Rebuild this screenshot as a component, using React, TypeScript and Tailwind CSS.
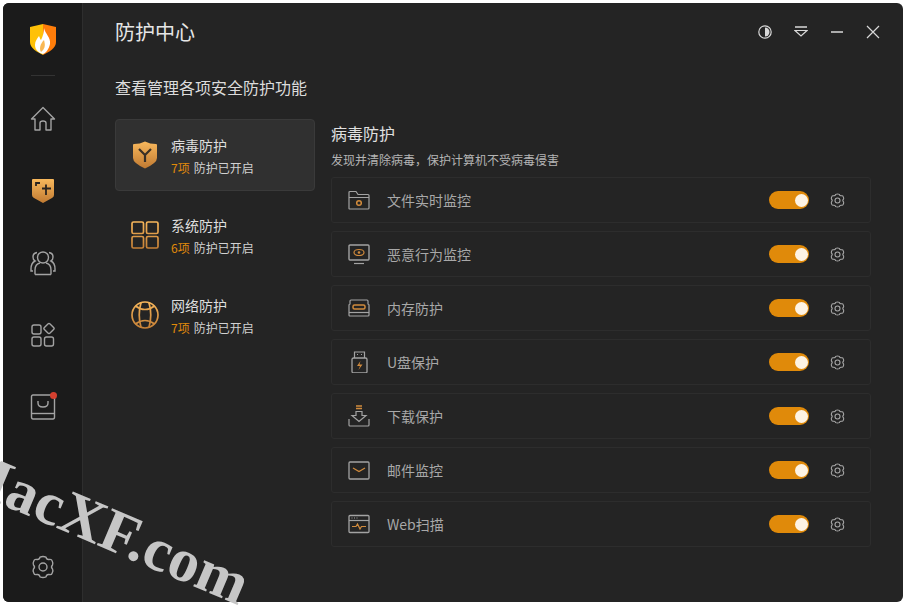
import React from "react";

const FONT = "[font-family:'Noto_Sans_CJK_SC','Liberation_Sans',sans-serif]";
const G = "#a3a3a3";
const A = "#d08a3c";

function Defs() {
  return (
    <svg width="0" height="0" className="absolute">
      <defs>
        <linearGradient id="amber" x1="0" y1="0" x2="0" y2="1">
          <stop offset="0" stopColor="#f8b85c" />
          <stop offset="1" stopColor="#c07a32" />
        </linearGradient>
        <linearGradient id="amberS" gradientUnits="userSpaceOnUse" x1="0" y1="0" x2="0" y2="30">
          <stop offset="0" stopColor="#f8b85c" />
          <stop offset="1" stopColor="#c07a32" />
        </linearGradient>
      </defs>
    </svg>
  );
}

const Logo = () => (
  <svg width="28" height="33" viewBox="0 0 28 33">
    <path d="M14 1 L1 4 V19 C1 25 8 29 14 32 Z" fill="#ffc107" />
    <path d="M14 1 L27 4 V19 C27 25 20 29 14 32 Z" fill="#ff7d0a" />
    <path d="M15 5 C16 11 22 14 21 21 C20 26 17 30 14 31 C10 30 6 27 6 22 C6 18 8 16 10 13 C11 15 11 16 12 17 C14 13 15 9 15 5 Z" fill="#fff" />
    <path d="M15 17 C16 21 17 25 12 29 C10 26 11 21 15 17 Z" fill="#f7a01c" opacity="0.75" />
  </svg>
);

const Home = () => (
  <svg width="26" height="26" viewBox="0 0 26 26" fill="none" stroke={G} strokeWidth="1.4">
    <path d="M1.5 13 L13 1.5 L24.5 13 H21 V24 H16 V17 Q16 15 13 15 Q10 15 10 17 V24 H5 V13 Z" strokeLinejoin="round" />
  </svg>
);

const ShieldNav = () => (
  <svg width="24" height="26" viewBox="0 0 24 26">
    <path d="M2 1 H22 Q23 1 23 2 V17 Q23 19 21 20 L12 25 L3 20 Q1 19 1 17 V2 Q1 1 2 1 Z" fill="url(#amber)" />
    <path d="M5 8 V5 H9 M11 10.5 H20 M15 6.5 V17" stroke="#2a2420" strokeWidth="1.8" fill="none" />
  </svg>
);

const Users = () => (
  <svg width="26" height="26" viewBox="0 0 26 26" fill="none" stroke={G} strokeWidth="1.4">
    <circle cx="13" cy="7.5" r="5.5" />
    <path d="M5 24.5 V20 Q5 14 10 13 M21 24.5 V20 Q21 14 16 13 M5 24.5 H21" />
    <path d="M7 2.5 Q3 3 3 7 Q3 10 5 11 Q1 13 1 19 V21 H3 M19 2.5 Q23 3 23 7 Q23 10 21 11 Q25 13 25 19 V21 H23" />
  </svg>
);

const Apps = () => (
  <svg width="26" height="26" viewBox="0 0 26 26" fill="none" stroke={G} strokeWidth="1.4">
    <rect x="2" y="3" width="9" height="9" rx="2" />
    <rect x="2" y="15" width="9" height="9" rx="2" />
    <rect x="14.5" y="15" width="9" height="9" rx="2" />
    <rect x="15" y="2.5" width="8" height="8" rx="1.5" transform="rotate(45 19 6.5)" />
  </svg>
);

const Store = () => (
  <svg width="26" height="26" viewBox="0 0 26 26" fill="none" stroke={G} strokeWidth="1.4">
    <path d="M24.5 4 V23 Q24.5 25 23 25 H3 Q1.5 25 1.5 23 V2.5 Q1.5 1 3 1 H21" />
    <path d="M1.5 19.5 H24.5" />
    <path d="M8 7 V9 Q8 13 13 13 Q18 13 18 9 V7" />
  </svg>
);

const Gear = ({ size = 24, color = G, sw = 1.4 }: { size?: number; color?: string; sw?: number }) => (
  <svg width={size} height={size} viewBox="0 0 24 24" fill="none" stroke={color} strokeWidth={sw} strokeLinejoin="round">
    <path d="M9 2.2 Q12 0.8 15 2.2 Q15.5 4.8 18 4.5 Q20.5 4 21 5.5 Q22.5 8.5 21.5 10 Q19.5 12 21.5 14 Q22.5 15.5 21 18.5 Q20.5 20 18 19.5 Q15.5 19.2 15 21.8 Q12 23.2 9 21.8 Q8.5 19.2 6 19.5 Q3.5 20 3 18.5 Q1.5 15.5 2.5 14 Q4.5 12 2.5 10 Q1.5 8.5 3 5.5 Q3.5 4 6 4.5 Q8.5 4.8 9 2.2 Z" />
    <circle cx="12" cy="12" r="4" />
  </svg>
);

const ShieldY = () => (
  <svg width="24" height="28" viewBox="0 0 24 28">
    <path d="M12 0.5 Q17 3 23 3 Q24 3 24 4 V17 Q24 22 12 27.5 Q0 22 0 17 V4 Q0 3 1 3 Q7 3 12 0.5 Z" fill="url(#amber)" />
    <path d="M6 8 L12 14 L18 8 M12 14 V21" stroke="#3a3026" strokeWidth="2.2" fill="none" />
  </svg>
);

const Grid = () => (
  <svg width="28" height="28" viewBox="0 0 28 28" fill="none" stroke="url(#amberS)" strokeWidth="1.7">
    <rect x="1" y="1" width="11.5" height="11.5" rx="1.5" />
    <rect x="15.5" y="1" width="11.5" height="11.5" rx="1.5" />
    <rect x="1" y="15.5" width="11.5" height="11.5" rx="1.5" />
    <rect x="15.5" y="15.5" width="11.5" height="11.5" rx="1.5" />
  </svg>
);

const Globe = () => (
  <svg width="28" height="28" viewBox="0 0 28 28" fill="none" stroke="url(#amberS)" strokeWidth="1.7">
    <circle cx="14" cy="14" r="13" />
    <path d="M4.5 5 Q9 8.5 14 8.5 Q19 8.5 23.5 5 M4.5 23 Q9 19.5 14 19.5 Q19 19.5 23.5 23" />
    <path d="M10 1.8 Q6.5 14 10 26.2 M18 1.8 Q21.5 14 18 26.2" />
  </svg>
);

const Svg22 = ({ children }: { children: React.ReactNode }) => (
  <svg width="22" height="22" viewBox="0 0 22 22" fill="none" stroke={G} strokeWidth="1.2">
    {children}
  </svg>
);

const IFolder = () => (
  <Svg22>
    <path d="M1 19.5 V3.5 Q1 2.5 2 2.5 H8 L10 5.5 H20 Q21 5.5 21 6.5 V19 Q21 20 20 20 H2 Q1 20 1 19.5 Z M1 8.5 H21" />
    <circle cx="11" cy="14" r="2.3" stroke={A} strokeWidth="1.5" />
  </Svg22>
);
const IScreen = () => (
  <Svg22>
    <rect x="1" y="2" width="20" height="15" rx="1" strokeWidth="1.4" />
    <path d="M6 20.5 H16" />
    <ellipse cx="11" cy="9.5" rx="5" ry="3" stroke={A} strokeWidth="1.2" />
    <circle cx="11" cy="9.5" r="1.3" fill={A} stroke="none" />
  </Svg22>
);
const IMem = () => (
  <Svg22>
    <path d="M3 3 H19 Q20 3 20 4 V7 Q21 7 21 8 V18 Q21 19 20 19 H2 Q1 19 1 18 V8 Q1 7 2 7 V4 Q2 3 3 3 Z" />
    <rect x="5" y="8" width="12" height="4" rx="1.5" stroke={A} strokeWidth="1.5" />
    <path d="M1 15.5 H21" />
  </Svg22>
);
const IUsb = () => (
  <Svg22>
    <rect x="4" y="7" width="15" height="15" rx="1.5" strokeWidth="1.3" />
    <path d="M6.5 7 V1 H16.5 V7 M9 3.5 H10 M13 3.5 H14" />
    <path d="M12.5 10 L9 15 H12 L10.5 19 L14.5 13.5 H11.5 Z" fill={A} stroke="none" />
  </Svg22>
);
const IDown = () => (
  <Svg22>
    <path d="M8 1 H14 M8 3.5 H14" stroke={A} strokeWidth="1.3" />
    <path d="M8 6.5 H14 V10.5 H18 L11 16.5 L4 10.5 H8 Z" />
    <path d="M1 14 V20 Q1 21 2 21 H20 Q21 21 21 20 V14" />
  </Svg22>
);
const IMail = () => (
  <Svg22>
    <rect x="1" y="3" width="20" height="17" rx="1" strokeWidth="1.3" />
    <path d="M5 9 L11 12.5 L17 9" stroke={A} strokeWidth="1.3" />
  </Svg22>
);
const IWeb = () => (
  <Svg22>
    <rect x="1" y="2.5" width="20" height="17" rx="1" strokeWidth="1.3" />
    <path d="M1 7.5 H21" />
    <path d="M3.5 5 H4.5 M6 5 H7 M8.5 5 H9.5" />
    <path d="M4 13.5 H8 L9.5 11 L12 16 L13.5 13.5 H18" stroke={A} />
  </Svg22>
);

const navItems = [<Home key="h" />, <ShieldNav key="s" />, <Users key="u" />, <Apps key="a" />];

const cats = [
  { icon: <ShieldY />, name: "病毒防护", count: "7项", active: true },
  { icon: <Grid />, name: "系统防护", count: "6项", active: false },
  { icon: <Globe />, name: "网络防护", count: "7项", active: false },
];

const rows = [
  { icon: <IFolder />, label: "文件实时监控" },
  { icon: <IScreen />, label: "恶意行为监控" },
  { icon: <IMem />, label: "内存防护" },
  { icon: <IUsb />, label: "U盘保护" },
  { icon: <IDown />, label: "下载保护" },
  { icon: <IMail />, label: "邮件监控" },
  { icon: <IWeb />, label: "Web扫描" },
];

export default function App() {
  return (
    <div className={`relative w-[907px] h-[607px] overflow-hidden bg-white pl-[3px] pt-[3px] pr-[4px] pb-[5px] ${FONT}`}>
      <Defs />
      <div className="flex h-full w-full overflow-hidden rounded-[6px] bg-[#242424]">
        <aside className="flex w-[80px] shrink-0 flex-col items-center border-r border-[#2e2e2e] bg-[#1b1b1b]">
          <div className="mt-[20px]"><Logo /></div>
          <div className="mt-[19px] h-px w-[24px] bg-[#333333]" />
          <div className="mt-[7px] flex flex-col items-center">
            {navItems.map((n, i) => (
              <div key={i} className="flex h-[72px] items-center justify-center">
                {n}
              </div>
            ))}
            <div className="relative flex h-[72px] items-center justify-center">
              <Store />
              <span className="absolute right-[-1px] top-[21px] h-[7px] w-[7px] rounded-full bg-[#d5402f]" />
            </div>
          </div>
          <div className="mt-auto mb-[23px]"><Gear /></div>
        </aside>

        <main className="flex min-w-0 flex-1 flex-col pl-[32px] pr-[32px]">
          <header className="flex h-[58px] items-center justify-between">
            <h1 className="text-[20px] font-normal leading-none text-[#e6e6e6]">防护中心</h1>
            <div className="mr-[-9px] flex items-center gap-[22px] text-[#d8d8d8]">
              <svg width="14" height="14" viewBox="0 0 14 14" fill="none" stroke="currentColor" strokeWidth="1.2">
                <circle cx="7" cy="7" r="6.2" />
                <path d="M7 2.5 A4.5 4.5 0 0 1 7 11.5 Z" fill="currentColor" stroke="none" />
              </svg>
              <svg width="14" height="14" viewBox="0 0 14 14" fill="none" stroke="currentColor" strokeWidth="1.2">
                <path d="M1 2 H13" strokeWidth="1.4" />
                <path d="M1 5.5 H13 L7 11 Z" />
              </svg>
              <svg width="14" height="14" viewBox="0 0 14 14" fill="none" stroke="currentColor" strokeWidth="1.4">
                <path d="M1 7 H13" />
              </svg>
              <svg width="14" height="14" viewBox="0 0 14 14" fill="none" stroke="currentColor" strokeWidth="1.2">
                <path d="M1 1 L13 13 M13 1 L1 13" />
              </svg>
            </div>
          </header>

          <h2 className="mt-[14px] text-[16px] font-normal leading-[24px] text-[#dcdcdc]">查看管理各项安全防护功能</h2>

          <div className="mt-[20px] flex gap-[16px]">
            <div className="flex w-[200px] shrink-0 flex-col gap-[8px]">
              {cats.map((c) => (
                <div
                  key={c.name}
                  className={`flex h-[72px] items-center rounded-[4px] border pl-[15px] ${c.active ? "border-[#3a3a3a] bg-[#303030]" : "border-transparent"}`}
                >
                  <div className="flex w-[28px] justify-center"><span className="flex">{c.icon}</span></div>
                  <div className="ml-[12px] mt-[2px] flex flex-col">
                    <span className="text-[14px] leading-[22px] text-[#dedede]">{c.name}</span>
                    <span className="mt-[2px] flex text-[12px] leading-[20px] text-[#d2d2d2]">
                      <span className="mr-[4px] text-[#e08a0a]">{c.count}</span>防护已开启
                    </span>
                  </div>
                </div>
              ))}
            </div>

            <div className="flex min-w-0 flex-1 flex-col">
              <div className="mt-[2px] text-[16px] leading-[24px] text-[#e0e0e0]">病毒防护</div>
              <div className="mt-[6px] text-[12px] leading-[18px] text-[#b4b4b4]">发现并清除病毒，保护计算机不受病毒侵害</div>
              <div className="mt-[8px] flex flex-col gap-[8px]">
                {rows.map((r) => (
                  <div key={r.label} className="flex h-[46px] items-center rounded-[3px] border border-[#2d2d2d] pl-[16px] pr-[25px]">
                    <span className="flex">{r.icon}</span>
                    <span className="ml-[17px] text-[14px] text-[#a8a8a8]">{r.label}</span>
                    <div className="ml-auto flex h-[18px] w-[40px] items-center justify-end rounded-full bg-[#e08a0a] pr-[1px]">
                      <span className="h-[13px] w-[13px] rounded-full bg-[#fdf3e4]" />
                    </div>
                    <span className="ml-[21px] flex"><Gear size={15} color="#a8a8a8" sw={1.7} /></span>
                  </div>
                ))}
              </div>
            </div>
          </div>
        </main>
      </div>

      <div className="pointer-events-none absolute left-[-43px] top-[433px] origin-left rotate-[23deg] whitespace-nowrap text-[61px] font-bold leading-none text-[#c6c6c6] [font-family:'Liberation_Serif',serif]">
        MacXF.com
      </div>
    </div>
  );
}
